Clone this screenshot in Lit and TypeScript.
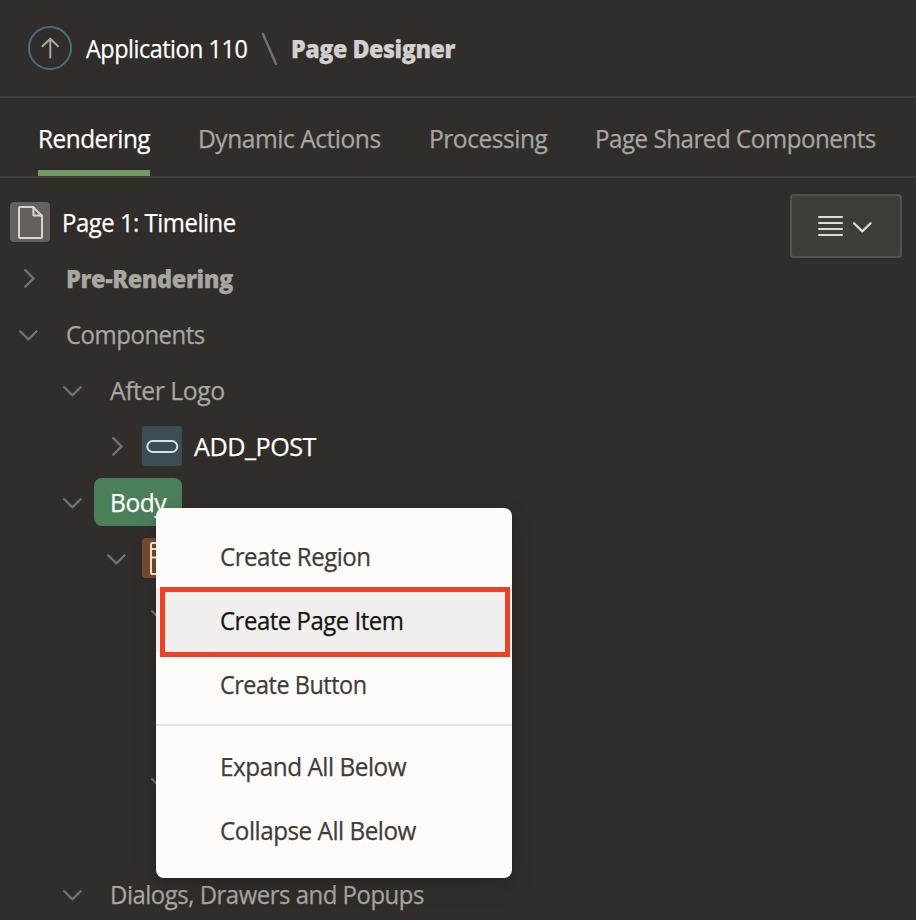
import { LitElement, html, svg, css, nothing } from "lit";
import { customElement, property, query } from "lit/decorators.js";
import { styleMap } from "lit/directives/style-map.js";

/** A label whose glyphs are condensed to occupy a given advance width. */
@customElement("fit-label")
class FitLabel extends LitElement {
  @property() text = "";
  @property({ type: Number }) width = 0;
  @query("span") private inner!: HTMLSpanElement;

  static styles = css`
    :host { display: block; flex: none; white-space: nowrap; }
    span { display: inline-block; transform-origin: 0 50%; white-space: pre; }
  `;

  updated() {
    this.style.width = `${this.width}px`;
    this.inner.style.transform = `scaleX(${this.width / this.inner.offsetWidth})`;
  }

  render() {
    return html`<span>${this.text}</span>`;
  }
}

type Icon = "page" | "button" | "region";
interface Row {
  level: number;
  text?: string;
  width?: number;
  open?: boolean;
  icon?: Icon;
  kind?: "root" | "bold" | "item" | "selected";
}

const tabs = [
  { text: "Rendering", width: 112 },
  { text: "Dynamic Actions", width: 183 },
  { text: "Processing", width: 118 },
  { text: "Page Shared Components", width: 281 },
];

const rows: Row[] = [
  { level: 0, text: "Page 1: Timeline", width: 174, icon: "page", kind: "root" },
  { level: 0, text: "Pre-Rendering", width: 167, open: false, kind: "bold" },
  { level: 0, text: "Components", width: 139, open: true },
  { level: 1, text: "After Logo", width: 115, open: true },
  { level: 2, text: "ADD_POST", width: 122, open: false, icon: "button", kind: "item" },
  { level: 1, text: "Body", width: 56, open: true, kind: "selected" },
  { level: 2, open: true, icon: "region", kind: "item" },
  { level: 3, open: true },
  { level: 3 },
  { level: 3 },
  { level: 3, open: true },
  { level: 3 },
  { level: 1, text: "Dialogs, Drawers and Popups", width: 314, open: true },
];

const menu = [
  [
    { text: "Create Region", width: 151 },
    { text: "Create Page Item", width: 183, active: true },
    { text: "Create Button", width: 147 },
  ],
  [
    { text: "Expand All Below", width: 186 },
    { text: "Collapse All Below", width: 196 },
  ],
];

const glyphs = {
  page: svg`<path d="M9.7 5H23L32 14V35.2Q32 36 31.2 36H9.8Q9 36 9 35.2V5.8Q9 5 9.7 5Z"/><path d="M23.4 5V13.4H32"/>`,
  button: svg`<rect x="5.3" y="15" width="30" height="11" rx="5.5"/>`,
  region: svg`<rect x="9" y="5" width="23" height="31" rx="1"/><path d="M9 11H32M9 19.5H32M20 19.5V36"/>`,
};

@customElement("app-root")
class AppRoot extends LitElement {
  static styles = css`
    :host {
      display: block; position: relative; box-sizing: border-box;
      width: 916px; height: 920px; overflow: hidden;
      background: #312d2a; color: #a8a6a3;
      font: 400 25px/36px "Open Sans", "Noto Sans", sans-serif;
      letter-spacing: -0.5px; -webkit-text-stroke: 0.25px currentColor;
    }
    svg { display: block; flex: none; fill: none; stroke: currentColor; stroke-linecap: round; stroke-linejoin: round; }
    header {
      display: flex; align-items: center; box-sizing: border-box; height: 98px;
      padding: 2px 28px 2px; border-bottom: 2px solid #423e3a;
    }
    .up { width: 44px; height: 44px; margin-right: 14px; color: #aaa8a6; }
    .up circle { stroke: #47707f; }
    .app { color: #fff; font-weight: 500; }
    .slash { width: 18px; height: 34px; margin: 2px 13px 0 13px; color: #75716e; }
    .designer { color: #d1d0ce; font-weight: 800; }
    nav {
      display: flex; gap: 48px; box-sizing: border-box; height: 80px;
      padding-left: 38px; border-bottom: 2px solid #423e3a;
    }
    .tab { box-sizing: border-box; height: 78px; padding-top: 22px; }
    .tab.on { color: #fff; font-weight: 500; border-bottom: 6px solid #759768; }
    .body { display: flex; justify-content: space-between; align-items: flex-start; padding: 16px 14px 0 10px; }
    .row { display: flex; align-items: center; height: 56px; }
    .toggle { width: 20px; height: 20px; margin-left: 8px; color: #75716e; }
    .label { margin-left: 28px; }
    .tile { display: grid; place-items: center; width: 40px; height: 40px; border-radius: 4px; }
    .tile svg { width: 40px; height: 40px; }
    .tile.page { background: #65605c; color: #d6d4d1; }
    .tile.button { background: #3b4e56; color: #cfe3e8; }
    .tile.region { background: #754a31; color: #fdebd2; }
    .item .tile { margin-left: 16px; }
    .item .label, .root .label { margin-left: 12px; color: #fff; font-weight: 500; }
    .bold .label { font-weight: 800; }
    .selected .label {
      display: flex; align-items: center; height: 48px; margin-left: 12px; padding: 0 16px;
      border-radius: 8px; background: #4a7f5a; color: #fff; font-weight: 500;
    }
    .view {
      display: flex; align-items: center; box-sizing: border-box; width: 112px; height: 64px;
      padding-left: 26px; gap: 9px; border: 2px solid #55514d; border-radius: 4px;
      background: #403c38; color: #dedcda;
    }
    .menu {
      position: absolute; left: 156px; top: 508px; width: 356px; box-sizing: border-box; height: 370px;
      padding: 16px 0; border-radius: 8px; background: #fcfbfa; color: #403c38;
      box-shadow: 0 8px 24px rgba(0, 0, 0, .12), 0 2px 5px rgba(0, 0, 0, .12);
    }
    .group + .group { margin-top: 8px; padding-top: 8px; border-top: 2px solid #e3e1df; }
    .entry { display: flex; align-items: center; height: 64px; padding-left: 64px; }
    .entry.active { position: relative; background: #f0efed; color: #161513; }
    .mark { position: absolute; left: 4px; right: 2px; top: -1px; bottom: -5px; border: 5px solid #ec4027; }
  `;

  private row(r: Row) {
    return html`<div class="row ${r.kind ?? ""}" style=${styleMap({ paddingLeft: `${r.level * 44}px` })}>
      ${r.open === undefined ? nothing : html`<svg class="toggle" viewBox="0 0 20 20" stroke-width="2.3">
        <path d=${r.open ? "M2.2 7.2L10.4 15.4L18.6 7.2" : "M7.2 2L15.6 10.4L7.2 18.8"} />
      </svg>`}
      ${r.icon ? html`<div class="tile ${r.icon}"><svg viewBox="0 0 40 40" stroke-width="2">${glyphs[r.icon]}</svg></div>` : nothing}
      ${r.text ? html`<div class="label"><fit-label .text=${r.text} .width=${r.width ?? 0}></fit-label></div>` : nothing}
    </div>`;
  }

  render() {
    return html`
      <header>
        <svg class="up" viewBox="0 0 44 44" stroke-width="2">
          <circle cx="22" cy="22" r="21" /><path d="M22.3 31.5V13M14.5 20.3L22.3 12.7L30 20.3" />
        </svg>
        <fit-label class="app" .text=${"Application 110"} .width=${161}></fit-label>
        <svg class="slash" viewBox="0 0 18 34" stroke-width="2.4"><path d="M3 2L16 32" /></svg>
        <fit-label class="designer" .text=${"Page Designer"} .width=${164}></fit-label>
      </header>
      <nav>
        ${tabs.map((t, i) => html`<div class="tab ${i === 0 ? "on" : ""}">
          <fit-label .text=${t.text} .width=${t.width}></fit-label></div>`)}
      </nav>
      <div class="body">
        <div>${rows.map((r) => this.row(r))}</div>
        <div class="view">
          <svg width="25" height="22" viewBox="0 0 25 22" stroke-width="2"><path d="M1 2H24M1 8H24M1 14H24M1 20H24" /></svg>
          <svg width="20" height="20" viewBox="0 0 20 20" stroke-width="2.2"><path d="M2 7.2L10.3 15.4L18.6 7.2" /></svg>
        </div>
      </div>
      <div class="menu">
        ${menu.map((g) => html`<div class="group">${g.map((e: { text: string; width: number; active?: boolean }) => html`
          <div class="entry ${e.active ? "active" : ""}">
            <fit-label .text=${e.text} .width=${e.width}></fit-label>
            ${e.active ? html`<div class="mark"></div>` : nothing}
          </div>`)}</div>`)}
      </div>
    `;
  }
}
